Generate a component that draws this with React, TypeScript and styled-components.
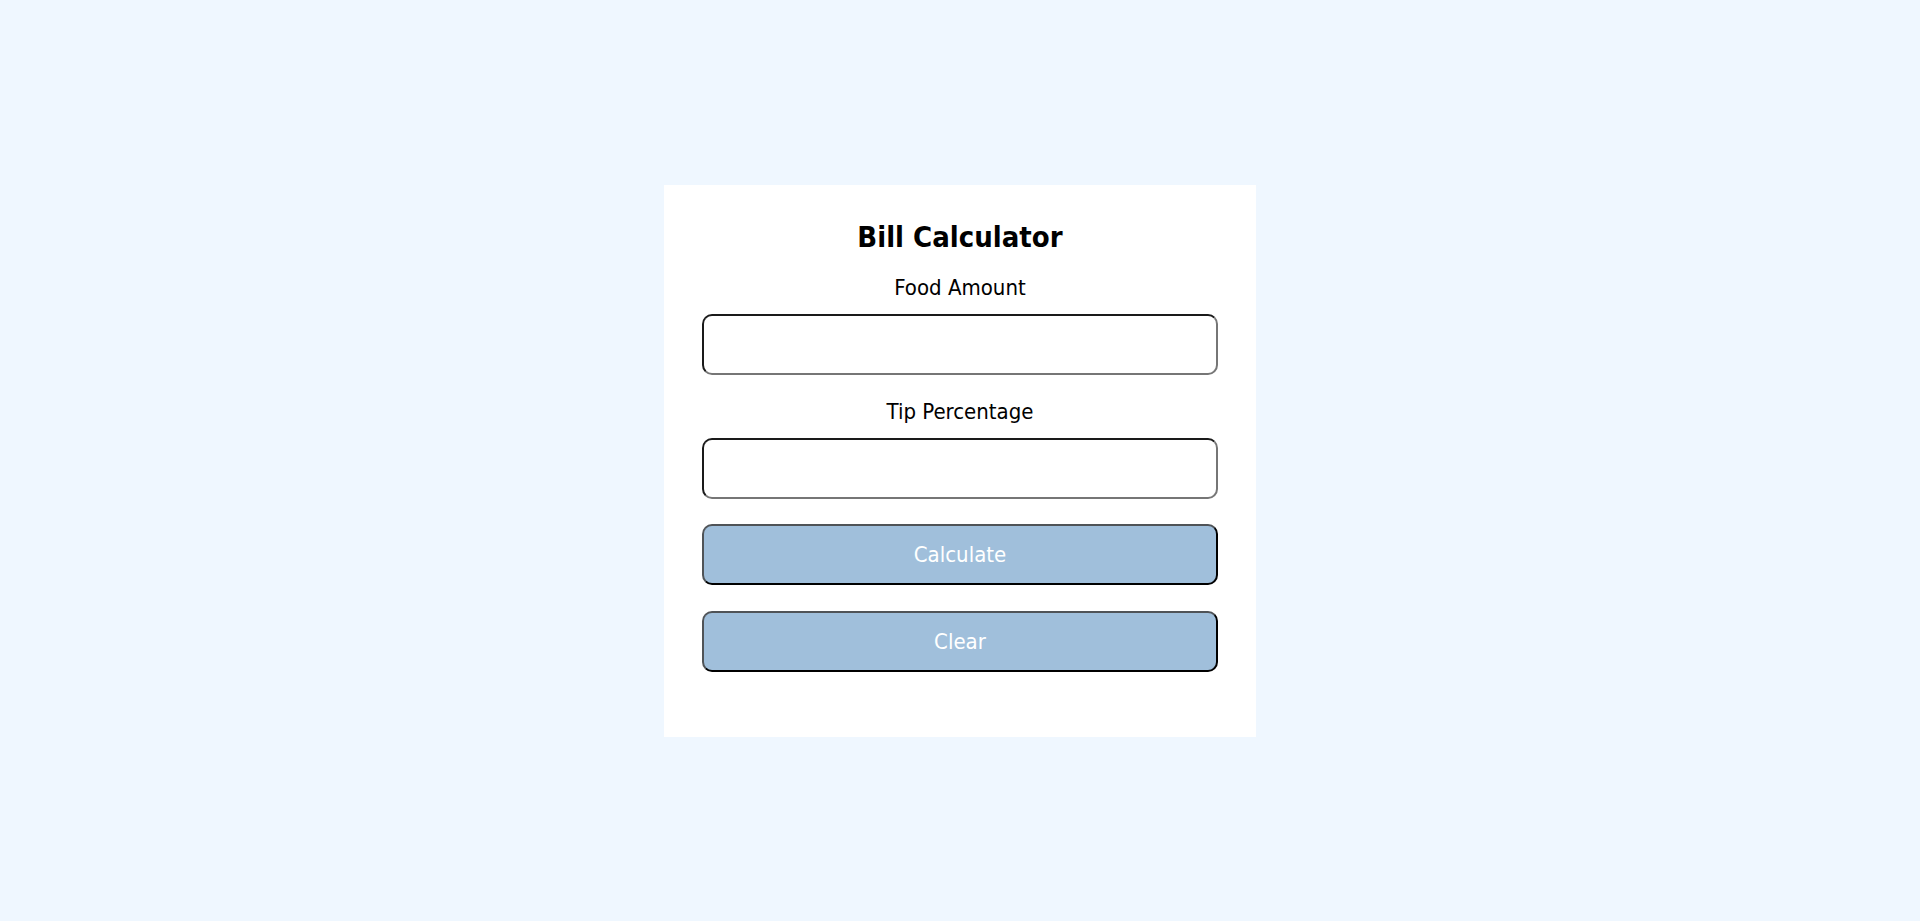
import React, { useState } from 'react';
import styled, { createGlobalStyle } from 'styled-components';

const GlobalStyle = createGlobalStyle`
  html, body {
    margin: 0;
    padding: 0;
    background-color: #eff7ff;
    font-family: "DejaVu Sans Condensed", "DejaVu Sans", Tahoma, sans-serif;
  }
`;

const Page = styled.div`
  min-height: 100vh;
  display: flex;
  align-items: center;
  justify-content: center;
`;

const Card = styled.div`
  width: 592px;
  box-sizing: border-box;
  padding: 35px 38px 65px;
  background-color: #ffffff;
  display: flex;
  flex-direction: column;
  align-items: stretch;
`;

const Title = styled.h2`
  margin: 0 0 19px;
  font-size: 29px;
  line-height: 35px;
  font-weight: bold;
  text-align: center;
  color: #000;
`;

const Label = styled.label`
  display: block;
  font-size: 22px;
  line-height: 28px;
  text-align: center;
  color: #000;
  margin-bottom: 12px;
`;

const Field = styled.input`
  box-sizing: border-box;
  height: 61px;
  width: 100%;
  padding: 0 14px;
  font-size: 22px;
  font-family: inherit;
  border: 2px solid;
  border-color: #1a1a1a #767676 #767676 #1a1a1a;
  border-radius: 10px;
  background: #fff;
  outline: none;
  margin-bottom: 23px;
`;

const Actions = styled.div`
  display: flex;
  flex-direction: column;
  gap: 26px;
  padding-top: 2px;
`;

const ActionButton = styled.button`
  box-sizing: border-box;
  height: 61px;
  width: 100%;
  font-size: 22px;
  font-family: inherit;
  color: #ffffff;
  background-color: #a0bfdb;
  border: 2px solid;
  border-color: #4f5357 #000 #000 #4f5357;
  border-radius: 10px;
  cursor: pointer;
`;

const App: React.FC = () => {
  const [food, setFood] = useState('');
  const [tip, setTip] = useState('');

  const handleCalculate = () => {
    const amount = parseFloat(food) || 0;
    const pct = parseFloat(tip) || 0;
    alert(`Total: ${(amount + (amount * pct) / 100).toFixed(2)}`);
  };

  const handleClear = () => {
    setFood('');
    setTip('');
  };

  return (
    <>
      <GlobalStyle />
      <Page>
        <Card>
          <Title>Bill Calculator</Title>
          <Label htmlFor="food">Food Amount</Label>
          <Field id="food" type="text" value={food} onChange={(e) => setFood(e.target.value)} />
          <Label htmlFor="tip">Tip Percentage</Label>
          <Field id="tip" type="text" value={tip} onChange={(e) => setTip(e.target.value)} />
          <Actions>
            <ActionButton onClick={handleCalculate}>Calculate</ActionButton>
            <ActionButton onClick={handleClear}>Clear</ActionButton>
          </Actions>
        </Card>
      </Page>
    </>
  );
};

export default App;
